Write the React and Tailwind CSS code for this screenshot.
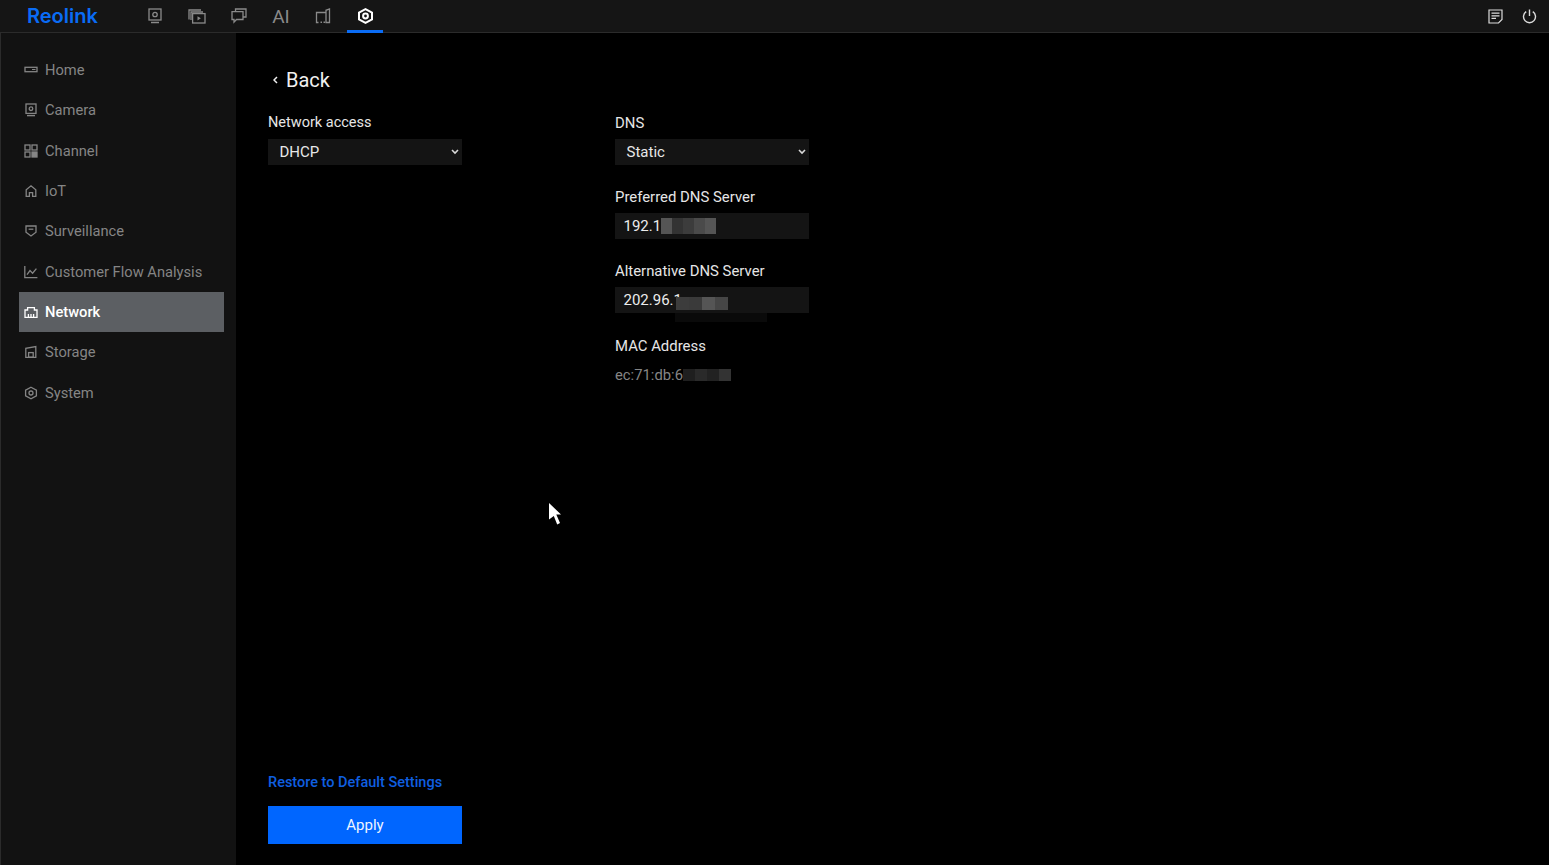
const Svg = ({ s = 14, children, className = "" }) => (
  <svg width={s} height={s} viewBox={`0 0 ${s} ${s}`} fill="none" stroke="currentColor" strokeWidth="1.3" className={"shrink-0 " + className}>{children}</svg>
);

const icons = {
  Home: <Svg><rect x="1" y="4.300" width="12" height="4.400" /><path d="M8 6.500h3.500" strokeWidth="1" /></Svg>,
  Camera: <Svg><rect x="2" y="1" width="10" height="9.400" /><circle cx="7" cy="5.700" r="1.800" /><path d="M3 12.600h8" strokeWidth="1.400" /></Svg>,
  Channel: <Svg><rect x="1" y="1" width="5" height="5" /><rect x="8" y="1" width="5" height="5" /><rect x="1" y="8" width="5" height="5" /><rect x="8" y="8" width="5" height="5" fill="currentColor" /></Svg>,
  IoT: <Svg><path d="M2.200 12.400V5.800L7 1.800l4.800 4v6.600H8.600V8.600H5.400v3.800z" /></Svg>,
  Surveillance: <Svg><path d="M2 2h10v6.200L7 12 2 8.200z" /><path d="M4.600 5.200h4.800" /></Svg>,
  "Customer Flow Analysis": <Svg><path d="M.8 1v11.600h12.600" /><path d="M3 9.600l3-4 2.600 2.600L12.400 3.600" /></Svg>,
  Network: <Svg><path d="M1 12.400V5h2.600V2.600h6.800V5H13v7.400z" /><path d="M4.400 12.200V9M7 12.200V9M9.600 12.200V9" /></Svg>,
  Storage: <Svg><path d="M1.800 12.400V3.400L11.800 1.600v10.800z" /><rect x="4.600" y="7.600" width="4.600" height="4.600" /></Svg>,
  System: <Svg><path d="M7 1.200l5.400 2.900v5.800L7 12.800 1.600 9.900V4.100z" /><circle cx="7" cy="7" r="2" /></Svg>,
};

const menu = ["Home", "Camera", "Channel", "IoT", "Surveillance", "Customer Flow Analysis", "Network", "Storage", "System"];

function Blur({ cells, className = "", cellClass = "w-[12px]" }) {
  return (
    <span className={"relative inline-flex " + className}>
      {cells.map((c, i) => (
        <span key={i} className={"h-full " + cellClass} style={{ background: c }} />
      ))}
    </span>
  );
}

function Label({ children, className = "text-[14.9px]" }) {
  return <div className={"h-[18px] leading-[20px] text-[#e6e6e6] " + className}>{children}</div>;
}

function Chevron() {
  return (
    <svg width="8" height="6" viewBox="0 0 8 6" fill="none" stroke="#d8d8d8" strokeWidth="1.600"><path d="M1 1l3 3 3-3" /></svg>
  );
}

function Select({ value }) {
  return (
    <div className="mt-[8px] flex h-[26px] w-[194px] items-center justify-between bg-[#141414] pl-[11.5px] pr-[3px] text-[15px] text-[#e8e8e8]">
      <span>{value}</span>
      <Chevron />
    </div>
  );
}

function Input({ value, children }) {
  return (
    <div className="relative mt-[8px] flex h-[26px] w-[194px] items-center bg-[#141414] pl-[8.500px] text-[15px] text-[#ececec]">
      <span>{value}</span>
      {children}
    </div>
  );
}

export default function App() {
  return (
    <div className="flex h-screen w-full flex-col overflow-hidden bg-black font-['Roboto',sans-serif]">
      <header className="flex h-[33px] shrink-0 items-center border-b border-[#2b2b2b] bg-[#151515] pl-[27px] pr-[12px]">
        <span className="w-[71px] font-['Inter',sans-serif] text-[20px] font-semibold leading-none text-[#0a6cf5]">Reolink</span>
        <nav className="ml-[48px] flex h-full items-center text-[#8a8a8a]">
          <span className="flex w-[18px] justify-center">
            <Svg s={16}><rect x="2" y="1" width="12" height="11" /><circle cx="8" cy="6.500" r="2.200" /><path d="M4 14.500h8" strokeWidth="1.500" /></Svg>
          </span>
          <span className="ml-[24px] flex w-[18px] justify-center">
            <svg width="18" height="15" viewBox="0 0 18 15" fill="none" stroke="currentColor" strokeWidth="1.300"><path d="M13 1H1v9.500" /><path d="M15 3H3v8" /><rect x="4.600" y="4.600" width="12.400" height="9.400" /><path d="M9.500 7.200v4.200l3.400-2.100z" fill="currentColor" stroke="none" /></svg>
          </span>
          <span className="ml-[24px] flex w-[18px] justify-center">
            <svg width="16" height="16" viewBox="0 0 16 16" fill="none" stroke="currentColor" strokeWidth="1.300"><path d="M4.500 3.500V1h10.500v8h-3" /><path d="M1 3.700h11v7.800H5.500L3 14.200v-2.700H1z" /></svg>
          </span>
          <span className="ml-[24px] flex w-[18px] justify-center text-[19px] leading-none">AI</span>
          <span className="ml-[24px] flex w-[18px] justify-center">
            <svg width="16" height="16" viewBox="0 0 16 16" fill="none" stroke="currentColor" strokeWidth="1.300"><path d="M3.500 14.500H1.500V4.500h9.500V2.300l3.500-1.300v13.500h-3.500V4.500" /><path d="M5.500 13.500h1.500v1.500H5.500zM8.500 13.500h1.500v1.500H8.500z" fill="currentColor" stroke="none" /></svg>
          </span>
          <span className="relative ml-[15px] flex h-full w-[36px] items-center justify-center text-white">
            <svg width="17" height="16" viewBox="0 0 17 16" fill="none" stroke="currentColor" strokeWidth="2"><path d="M8.500 1.200l6.500 3.300v7L8.500 14.800 2 11.500v-7z" /><circle cx="8.500" cy="8" r="2.400" /></svg>
            <span className="absolute inset-x-0 -bottom-px h-[3px] bg-[#0a6cf5]" />
          </span>
        </nav>
        <div className="ml-auto flex items-center gap-[19px] text-[#dcdcdc]">
          <svg width="15" height="15" viewBox="0 0 15 15" fill="none" stroke="currentColor" strokeWidth="1.200"><path d="M1 1h13v9.500L10.500 14H1z" /><path d="M3.500 4.200h8M3.500 6.800h8M3.500 9.400h4.500" /></svg>
          <svg width="15" height="15" viewBox="0 0 15 15" fill="none" stroke="currentColor" strokeWidth="1.400"><path d="M4.200 2.700a6 6 0 1 0 6.600 0" /><path d="M7.500 0.500v6.500" /></svg>
        </div>
      </header>

      <div className="flex min-h-0 flex-1">
        <aside className="w-[236px] shrink-0 border-l border-[#2b2b2b] bg-[#121212] pl-[18px] pr-[12px] pt-[17px]">
          {menu.map((m) => (
            <div
              key={m}
              className={
                "flex h-[40.33px] items-center gap-[7px] pl-[5px] text-[14.7px] " +
                (m === "Network" ? "bg-[#5c5f63] font-medium text-white" : "text-[#858585]")
              }
            >
              {icons[m]}
              <span>{m}</span>
            </div>
          ))}
        </aside>

        <main className="relative flex min-w-0 flex-1 flex-col pl-[32px] pt-[34px]">
          <div className="flex h-[26px] items-center pl-[5px] text-[20px] text-[#f0f0f0]">
            <svg width="5" height="8" viewBox="0 0 5 8" fill="none" stroke="currentColor" strokeWidth="1.500"><path d="M4 1L1 4l3 3" /></svg>
            <span className="ml-[8px]">Back</span>
          </div>

          <div className="mt-[20px] flex gap-[153px]">
            <div>
              <Label className="text-[14.5px]">Network access</Label>
              <Select value="DHCP" />
            </div>
            <div>
              <Label>DNS</Label>
              <Select value="Static" />
              <div className="mt-[22px]"><Label>Preferred DNS Server</Label></div>
              <Input value="192.1">
                <Blur cells={["#555555", "#333333", "#3c3c3c", "#4a4a4a", "#555555"]} cellClass="w-[11px]" className="h-[16px]" />
              </Input>
              <div className="mt-[22px]"><Label>Alternative DNS Server</Label></div>
              <Input value="202.96.1">
                <Blur cells={["#3c3c3c", "#3a3a3a", "#555555", "#464646"]} cellClass="w-[13px]" className="ml-[-6px] mt-[6px] h-[13px]" />
                <span className="absolute left-[60px] top-[26px] h-[9px] w-[92px] bg-[#0a0a0a]" />
              </Input>
              <div className="mt-[23px]"><Label>MAC Address</Label></div>
              <div className="mt-[8px] flex h-[26px] items-center text-[14.8px] text-[#858585]">
                <span>ec:71:db:6</span>
                <Blur cells={["#1f1f1f", "#2a2a2a", "#222222", "#333333"]} className="h-[12px]" />
              </div>
            </div>
          </div>

          <div className="mt-auto pb-[21px]">
            <div className="text-[14.5px] font-medium leading-[18px] text-[#0f5fe0]">Restore to Default Settings</div>
            <button className="mt-[14px] block h-[38px] w-[194px] bg-[#0066ff] text-[15px] text-[#eef4ff]">Apply</button>
          </div>

          <svg width="14" height="22" viewBox="0 0 14 22" className="absolute left-[312px] top-[470px]" fill="#ffffff">
            <path d="M1 0l12 11.500H8.300L12 20l-2.800 1.500L5.800 13 1 16.500z" />
          </svg>
        </main>
      </div>
    </div>
  );
}
